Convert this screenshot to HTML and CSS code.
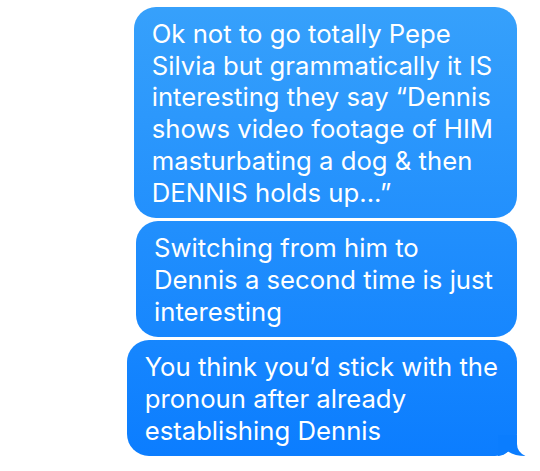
FILE: index.html
```html
<!DOCTYPE html>
<html lang="en">
<head>
    <meta charset="UTF-8">
    <meta name="viewport" content="width=device-width, initial-scale=1.0">
    <title>Messages</title>
    <link rel="stylesheet" href="styles.css">
</head>
<body>
    <div class="thread">
        <div class="bubble">Ok not to go totally Pepe<br>Silvia but grammatically it IS<br>interesting they say “Dennis<br>shows video footage of HIM<br>masturbating a dog &amp; then<br>DENNIS holds up...”</div>
        <div class="bubble">Switching from him to<br>Dennis a second time is just<br>interesting</div>
        <div class="bubble last">You think you’d stick with the<br>pronoun after already<br>establishing Dennis<svg class="tail" width="30" height="21" viewBox="0 0 30 21"><path d="M0 0H19V9Q19 17 27.5 21Q17 21 10 16.5Q6 20.5 0 21Z" fill="#0b7dfe"/></svg></div>
    </div>
</body>
</html>
```

FILE: styles.css
```css
body {
    margin: 0;
    padding: 0;
    background-color: white;
    font-family: 'Inter', 'Noto Sans', sans-serif;
}

.thread {
    display: flex;
    flex-direction: column;
    align-items: flex-end;
    gap: 3px;
    padding: 7px 23px 0 0;
}

.bubble {
    position: relative;
    padding: 11px 24px 10px 18px;
    border-radius: 22px;
    color: white;
    font-size: 25.7px;
    line-height: 31.7px;
    background: linear-gradient(#37a1fb 0, #0a7cff 471px) fixed;
}

.last {
    padding-right: 19px;
}

.tail {
    position: absolute;
    right: -11px;
    bottom: 0;
    display: block;
}
```
